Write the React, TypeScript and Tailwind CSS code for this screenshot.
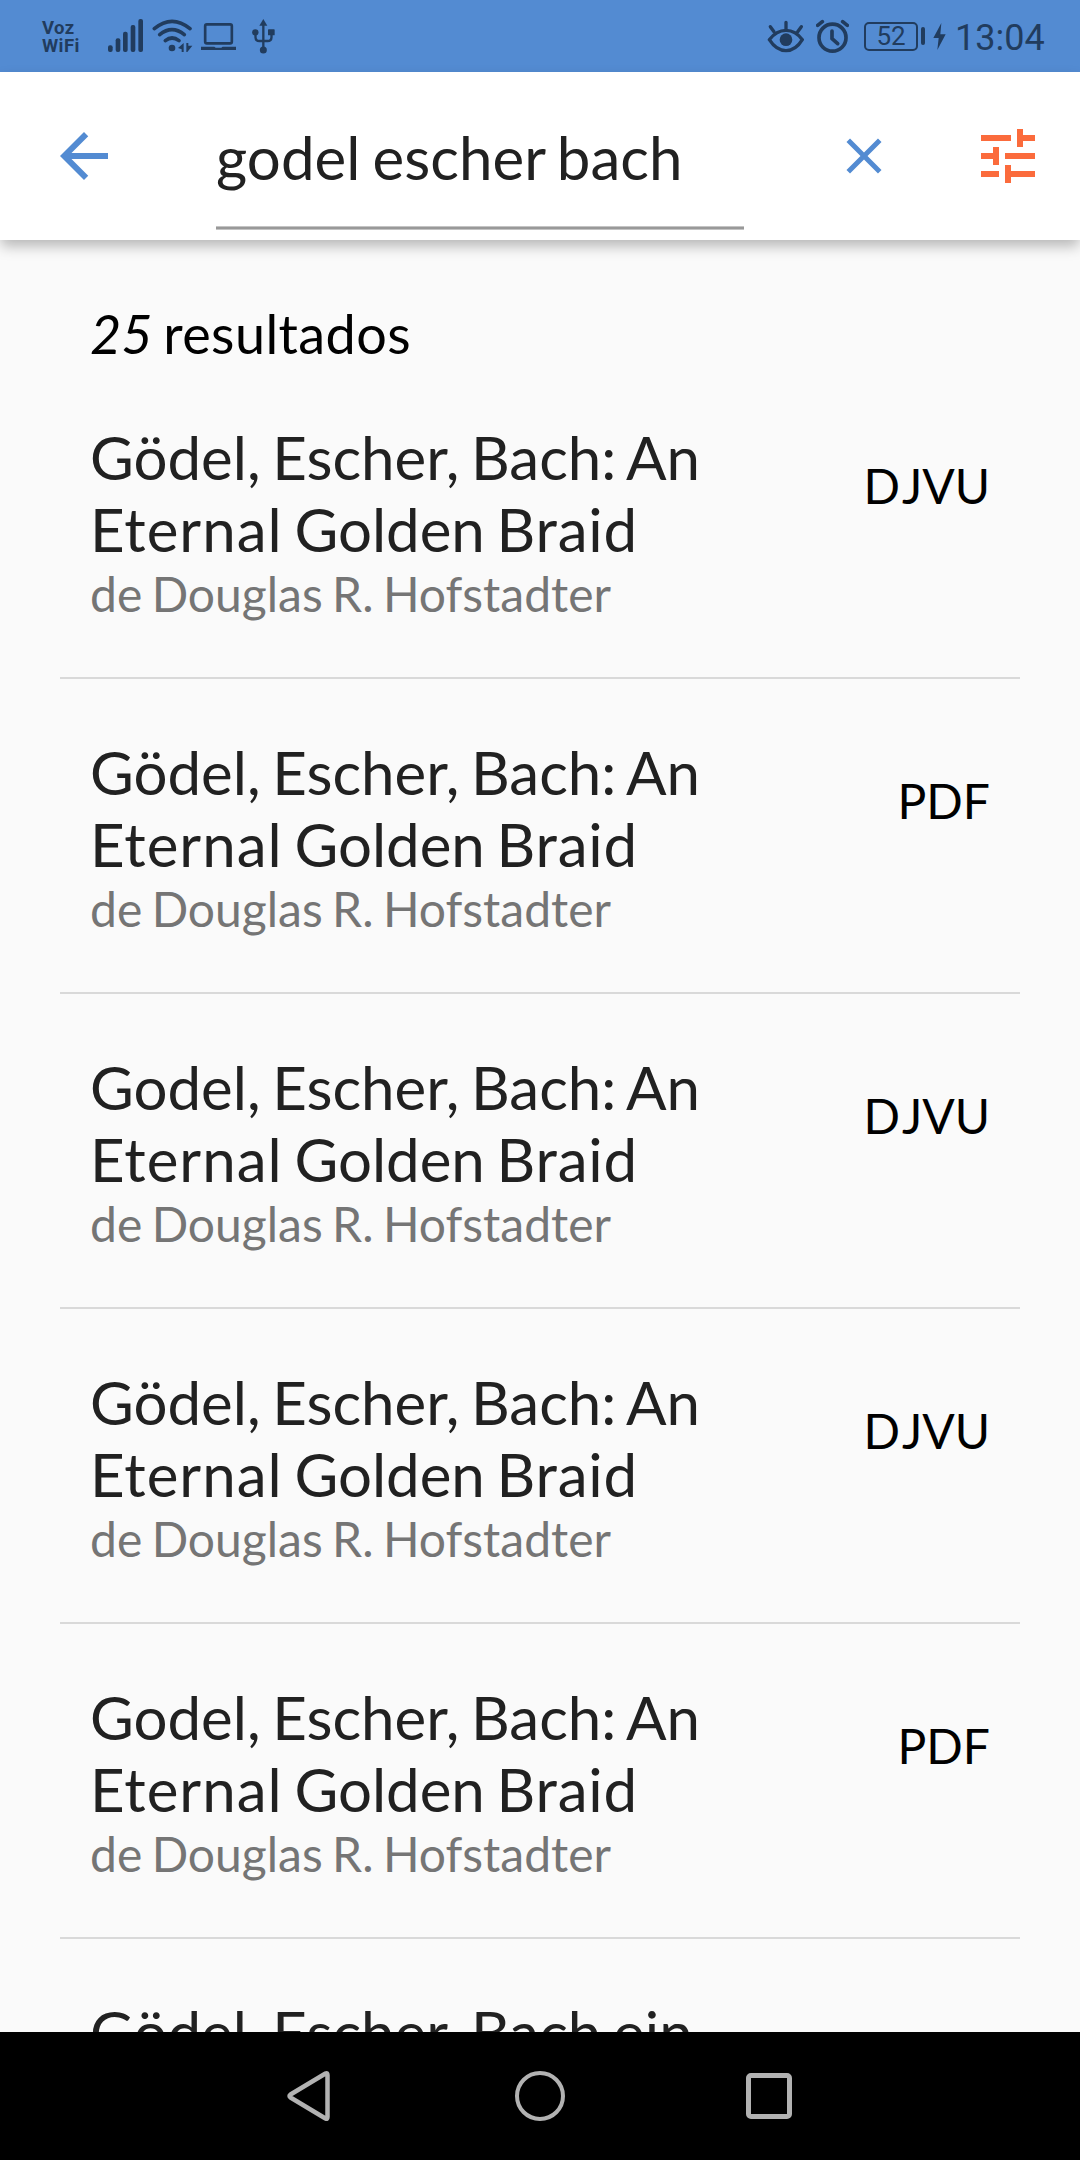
import React from "react";

type Result = { title: React.ReactNode; author: string; format: React.ReactNode };

const AUTHOR = "de Douglas R. Hofstadter";

const Subtitle = () => (
  <>
    <span className="tracking-[1px]">Eternal</span> Golden <span className="tracking-[0.8px]">Braid</span>
  </>
);

const Djvu = () => (
  <>
    <span className="tracking-[1.8px]">D</span>JVU
  </>
);

const results: Result[] = [
  { title: <>Gödel, Escher, Bach: An <Subtitle /></>, author: AUTHOR, format: <Djvu /> },
  { title: <>Gödel, Escher, Bach: An <Subtitle /></>, author: AUTHOR, format: "PDF" },
  { title: <>Godel, Escher, Bach: An <Subtitle /></>, author: AUTHOR, format: <Djvu /> },
  { title: <>Gödel, Escher, Bach: An <Subtitle /></>, author: AUTHOR, format: <Djvu /> },
  { title: <>Godel, Escher, Bach: An <Subtitle /></>, author: AUTHOR, format: "PDF" },
  { title: "Gödel, Escher, Bach ein", author: "", format: "" },
];

function SignalIcon() {
  return (
    <svg viewBox="234 0 105 216" className="ml-7 h-[72px] w-[35px]" fill="currentColor">
      <rect x="234" y="136" width="14" height="20" rx="6" />
      <rect x="257" y="115" width="14" height="41" rx="6" />
      <rect x="279" y="95" width="14" height="61" rx="6" />
      <rect x="302" y="75" width="14" height="81" rx="6" />
      <rect x="325" y="57" width="14" height="99" rx="6" />
    </svg>
  );
}

function WifiIcon() {
  return (
    <svg viewBox="366 0 123 216" className="ml-[9px] h-[72px] w-[41px]" fill="none" stroke="currentColor" strokeWidth="11" strokeLinecap="round">
      <path d="M373 86Q426 42 480 86" />
      <path d="M389 104Q426 74 463 104" />
      <path d="M406 122Q426 106 447 122" />
      <circle cx="426" cy="144" r="10" fill="currentColor" stroke="none" />
      <path d="M461 129V156H455V148L444 144ZM469 129H475V137H487L472 156H469Z" fill="currentColor" stroke="none" />
    </svg>
  );
}

function LaptopIcon() {
  return (
    <svg viewBox="513 0 105 216" className="ml-2 h-[72px] w-[35px]" fill="none" stroke="currentColor">
      <rect x="525.5" y="73" width="80" height="57" rx="5" strokeWidth="8" />
      <path d="M513 140H553L557 143H574L578 140H618V150H513Z" fill="currentColor" stroke="none" />
    </svg>
  );
}

function UsbIcon() {
  return (
    <svg viewBox="666 0 69 216" className="ml-4 h-[72px] w-[23px]" fill="currentColor">
      <path d="M700 57L712 77H688Z" />
      <circle cx="700" cy="150" r="10.5" />
      <circle cx="676" cy="97" r="9.5" />
      <rect x="714" y="88" width="20" height="18" rx="2" />
      <path d="M700 72V146M676.500 100V112Q677 123 688 123H713Q724 123 724.500 112V100" fill="none" stroke="currentColor" strokeWidth="7" />
    </svg>
  );
}

function EyeIcon() {
  return (
    <svg viewBox="51 0 111 216" className="h-[72px] w-[37px]" fill="none" stroke="currentColor" strokeWidth="10" strokeLinecap="round" strokeLinejoin="round">
      <path d="M58 119Q79 91 108 91Q137 91 157 119Q137 152 108 152Q79 152 58 119Z" />
      <path d="M108 67V86M61 80L72 95M154 80L143 95" strokeWidth="10" />
      <circle cx="108" cy="119" r="19" fill="currentColor" stroke="none" />
    </svg>
  );
}

function AlarmIcon() {
  return (
    <svg viewBox="198 0 99 216" className="ml-3 h-[72px] w-[33px]" fill="none" stroke="currentColor" strokeWidth="11" strokeLinecap="round">
      <circle cx="247.500" cy="113" r="40.5" />
      <path d="M203 76L217 65M292 76L278 65" />
      <path d="M246 93V116L263 131" strokeLinejoin="round" />
    </svg>
  );
}

function Battery() {
  return (
    <div className="ml-[15px] flex items-center gap-[2.500px]">
      <div className="flex h-[29px] w-[54px] items-center justify-center rounded-[5px] border-2 border-current font-[Roboto,sans-serif] text-[26px] leading-none">
        52
      </div>
      <div className="h-[18px] w-[4.500px] rounded-[2px] bg-current" />
    </div>
  );
}

function StatusBar() {
  return (
    <div className="flex h-[72px] shrink-0 items-center justify-between bg-[#538bd2] pl-[42px] pr-[35px] text-[#213c5e]">
      <div className="flex items-center">
        <div className="w-[38px] whitespace-nowrap pt-px font-[Roboto,sans-serif] text-[18.500px] font-bold leading-[18px] tracking-[0.4px]">
          <div>Voz</div>
          <div>WiFi</div>
        </div>
        <SignalIcon />
        <WifiIcon />
        <LaptopIcon />
        <UsbIcon />
      </div>
      <div className="flex items-center">
        <EyeIcon />
        <AlarmIcon />
        <Battery />
        <svg viewBox="549 0 39 216" className="ml-2 h-[72px] w-[13px]" fill="currentColor">
          <path d="M574 69L550 114H566L562 150L587 103H571Z" />
        </svg>
        <div className="ml-[9px] w-[90px] whitespace-nowrap pt-[3px] font-[Roboto,sans-serif] text-[36px] leading-none">13:04</div>
      </div>
    </div>
  );
}

function SearchBar() {
  return (
    <header className="z-10 flex h-[168px] shrink-0 items-center bg-white pl-12 pr-9 shadow-[0_7px_13px_-1px_rgba(0,0,0,0.28)]">
      <svg viewBox="0 0 24 24" className="size-[72px] text-[#538bd2]" fill="currentColor">
        <path d="M20 11H7.830l5.590-5.590L12 4l-8 8 8 8 1.410-1.410L7.830 13H20v-2z" />
      </svg>
      <div className="ml-24 flex h-[158px] w-[528px] flex-col justify-between self-start pt-[49px]">
        <div className="text-[60px] leading-[72px] tracking-[0.08px] text-[#212121]">godel escher bach</div>
        <div className="h-1 border-y border-[#c4c4c4] bg-[#999999]" />
      </div>
      <svg viewBox="0 0 24 24" className="ml-[90px] size-[60px] text-[#538bd2]" fill="currentColor">
        <path d="M19 6.410L17.590 5 12 10.590 6.410 5 5 6.410 10.590 12 5 17.590 6.410 19 12 13.410 17.590 19 19 17.590 13.410 12z" />
      </svg>
      <svg viewBox="0 0 24 24" className="ml-[78px] size-[72px] text-[#fb6b3c]" fill="currentColor">
        <path d="M3 17v2h6v-2H3zM3 5v2h10V5H3zm10 16v-2h8v-2h-8v-2h-2v6h2zM7 9v2H3v2h4v2h2V9H7zm14 4v-2H11v2h10zm-6-4h2V7h4V5h-4V3h-2v6z" />
      </svg>
    </header>
  );
}

function ResultRow({ title, author, format }: Result) {
  return (
    <li className="flex h-[315px] shrink-0 justify-between border-b-2 border-[#d9d9d9] px-[30px]">
      <div className="w-[660px] pt-[57px]">
        <h2 className="text-[60px] leading-[72px] [word-spacing:-0.06em] text-[#212121]">{title}</h2>
        <p className="text-[48px] leading-[58px] [word-spacing:-0.06em] text-[#757575]">{author}</p>
      </div>
      <span className="pt-[93px] text-[48px] leading-[58px] text-black">{format}</span>
    </li>
  );
}

function NavBar() {
  return (
    <nav className="flex h-32 shrink-0 items-center bg-black pl-[284px] text-[#b2b2b2]">
      <svg viewBox="0 0 50 54" className="h-[54px] w-[50px]" fill="none" stroke="currentColor" strokeWidth="4.500" strokeLinejoin="round">
        <path d="M41.500 4.500Q43.500 3.500 43.500 6V48Q43.500 50.500 41.500 49.500L6.500 28.500Q4.500 27 6.500 25.500Z" />
      </svg>
      <div className="ml-[181px] size-[50px] rounded-full border-4 border-current" />
      <div className="ml-[181px] size-[46px] rounded-[5px] border-[5px] border-current" />
    </nav>
  );
}

export default function App() {
  return (
    <div className="flex h-[2160px] w-[1080px] flex-col overflow-hidden bg-[#fafafa] font-[Lato,sans-serif] [word-spacing:-3.6px]">
      <StatusBar />
      <SearchBar />
      <main className="flex min-h-0 flex-1 flex-col overflow-hidden px-[60px]">
        <p className="mt-[61px] h-[63px] shrink-0 pl-[30px] text-[54px] leading-[65px] [word-spacing:-0.06em] text-black">
          <em>25</em> <span className="tracking-[0.4px]">resultados</span>
        </p>
        <ul className="flex flex-col">
          {results.map((r, i) => (
            <ResultRow key={i} {...r} />
          ))}
        </ul>
      </main>
      <NavBar />
    </div>
  );
}
